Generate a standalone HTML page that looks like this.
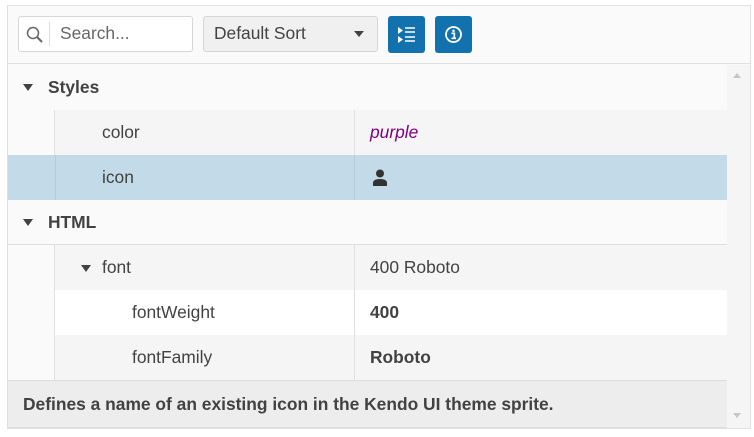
<!DOCTYPE html>
<html><head><style>
*{box-sizing:border-box;margin:0;padding:0}
body{width:754px;height:437px;background:#fff;font-family:"Liberation Sans",sans-serif;font-size:17.4px;color:#424242;position:relative;overflow:hidden}
.a{position:absolute}
.wrap{left:7px;top:5px;width:744px;height:424px;border:1px solid #e0e0e0;background:#fafafa}
.row{position:absolute;left:8px;width:719px;height:45px}
.t{position:absolute;top:12px;white-space:nowrap}
</style></head><body>
<div class="a wrap"></div>
<!-- toolbar -->
<div class="a" style="left:8px;top:6px;width:742px;height:58px;background:#fafafa;border-bottom:1px solid #e0e0e0"></div>
<div class="a" style="left:18px;top:16px;width:175px;height:36px;border:1px solid #d6d6d6;border-radius:3px;background:#fff"></div>
<svg class="a" style="left:25px;top:25px" width="20" height="20" viewBox="0 0 20 20"><circle cx="8" cy="8" r="5.5" fill="none" stroke="#666" stroke-width="1.5"/><path d="M12 12L17 17" stroke="#666" stroke-width="2"/></svg>
<div class="a" style="left:49px;top:22px;width:1px;height:24px;background:#ddd"></div>
<div class="a" style="left:60px;top:23px;color:#666">Search...</div>
<div class="a" style="left:203px;top:16px;width:175px;height:36px;border:1px solid #d6d6d6;border-radius:3px;background:#f0f0f0"></div>
<div class="a" style="left:214px;top:23px">Default Sort</div>
<div class="a" style="left:354px;top:31px;width:0;height:0;border-left:5px solid transparent;border-right:5px solid transparent;border-top:6px solid #424242"></div>
<div class="a" style="left:388px;top:16px;width:37px;height:37px;border-radius:3px;background:#1272ae"></div>
<svg class="a" style="left:396px;top:24px" width="22" height="22" viewBox="0 0 22 22"><path d="M2 3l5 3.5-5 3.5zM2 12l5 3.5-5 3.5z" fill="#fff"/><path d="M9 4h10M9 8h10M9 13h10M9 17h10" stroke="#fff" stroke-width="1.5"/></svg>
<div class="a" style="left:435px;top:16px;width:37px;height:37px;border-radius:3px;background:#1272ae"></div>
<svg class="a" style="left:444px;top:25px" width="19" height="19" viewBox="0 0 19 19"><circle cx="9.5" cy="9.5" r="7.5" fill="none" stroke="#fff" stroke-width="1.8"/><circle cx="9.5" cy="5.8" r="1.3" fill="#fff"/><path d="M7.5 8.3h2.8v4.8M7.5 13.3h4.5" stroke="#fff" stroke-width="1.7" fill="none"/></svg>
<!-- rows -->
<div class="row" style="top:65px;background:#fafafa"><div class="a" style="left:15px;top:19px;border-left:5px solid transparent;border-right:5px solid transparent;border-top:7px solid #424242"></div><div class="t" style="left:40px;font-weight:bold">Styles</div></div>
<div class="row" style="top:110px;background:#f5f5f5"><div class="a" style="left:0;top:0;width:47px;height:45px;background:#fafafa;border-right:1px solid #e0e0e0"></div><div class="t" style="left:94px">color</div><div class="a" style="left:346px;top:0;width:1px;height:45px;background:#e0e0e0"></div><div class="t" style="left:362px;color:#800080;font-style:italic">purple</div></div>
<div class="row" style="top:155px;background:#c3dbe8"><div class="a" style="left:47px;top:0;width:1px;height:45px;background:#b5cdda"></div><div class="t" style="left:94px">icon</div><div class="a" style="left:346px;top:0;width:1px;height:45px;background:#b5cdda"></div>
<svg class="a" style="left:364px;top:14px" width="16" height="17" viewBox="0 0 16 17"><circle cx="8" cy="4.5" r="4" fill="#333"/><path d="M1 17v-3q0-4 7-4t7 4v3z" fill="#333"/></svg></div>
<div class="row" style="top:200px;background:#fafafa;border-bottom:1px solid #e0e0e0"><div class="a" style="left:15px;top:19px;border-left:5px solid transparent;border-right:5px solid transparent;border-top:7px solid #424242"></div><div class="t" style="left:40px;font-weight:bold">HTML</div></div>
<div class="row" style="top:245px;background:#f5f5f5"><div class="a" style="left:0;top:0;width:47px;height:45px;background:#fafafa;border-right:1px solid #e0e0e0"></div><div class="a" style="left:73px;top:20px;border-left:5px solid transparent;border-right:5px solid transparent;border-top:7px solid #424242"></div><div class="t" style="left:94px">font</div><div class="a" style="left:346px;top:0;width:1px;height:45px;background:#e0e0e0"></div><div class="t" style="left:362px">400 Roboto</div></div>
<div class="row" style="top:290px;background:#fff"><div class="a" style="left:0;top:0;width:47px;height:45px;background:#fafafa;border-right:1px solid #e0e0e0"></div><div class="t" style="left:124px">fontWeight</div><div class="a" style="left:346px;top:0;width:1px;height:45px;background:#e0e0e0"></div><div class="t" style="left:362px;font-weight:bold">400</div></div>
<div class="row" style="top:335px;background:#f5f5f5"><div class="a" style="left:0;top:0;width:47px;height:45px;background:#fafafa;border-right:1px solid #e0e0e0"></div><div class="t" style="left:124px">fontFamily</div><div class="a" style="left:346px;top:0;width:1px;height:45px;background:#e0e0e0"></div><div class="t" style="left:362px;font-weight:bold">Roboto</div></div>
<!-- description -->
<div class="a" style="left:8px;top:380px;width:719px;height:48px;background:#ededed;border-top:1px solid #ddd;border-bottom:1px solid #ddd"></div>
<div class="a" style="left:23px;top:394px;font-weight:bold">Defines a name of an existing icon in the Kendo UI theme sprite.</div>
<!-- scrollbar -->
<div class="a" style="left:727px;top:65px;width:23px;height:363px;background:#f5f5f5"></div>
<div class="a" style="left:733px;top:73px;border-left:4px solid transparent;border-right:4px solid transparent;border-bottom:5px solid #c6c6c6"></div>
<div class="a" style="left:733px;top:413px;border-left:4px solid transparent;border-right:4px solid transparent;border-top:5px solid #c6c6c6"></div>
</body></html>
